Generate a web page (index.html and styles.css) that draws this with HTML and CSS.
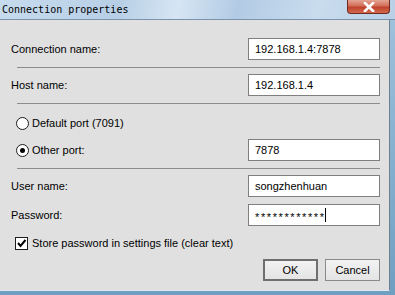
FILE: index.html
```html
<!DOCTYPE html>
<html lang="en">
<head>
    <meta charset="UTF-8">
    <title>Connection properties</title>
    <link rel="stylesheet" href="styles.css">
</head>
<body>
    <div class="window">
        <div class="titlebar">
            <span class="title">Connection properties</span>
            <div class="close-btn">
                <svg width="16" height="10" viewBox="0 0 16 10">
                    <path d="M4 1 L12 9 M12 1 L4 9" stroke="#fff" stroke-width="2.6" stroke-linecap="square"/>
                </svg>
            </div>
        </div>
        <div class="frame">
            <div class="content">
                <div class="row first">
                    <label class="label">Connection name:</label>
                    <div class="field">192.168.1.4:7878</div>
                </div>
                <div class="sep"></div>
                <div class="row">
                    <label class="label">Host name:</label>
                    <div class="field">192.168.1.4</div>
                </div>
                <div class="sep"></div>
                <div class="option-row">
                    <span class="radio"></span>
                    <span>Default port (7091)</span>
                </div>
                <div class="row port-row">
                    <div class="option">
                        <span class="radio checked"></span>
                        <span>Other port:</span>
                    </div>
                    <div class="field">7878</div>
                </div>
                <div class="sep"></div>
                <div class="row">
                    <label class="label">User name:</label>
                    <div class="field">songzhenhuan</div>
                </div>
                <div class="row pass-row">
                    <label class="label">Password:</label>
                    <div class="field password">************<span class="caret"></span></div>
                </div>
                <div class="check-row">
                    <span class="checkbox">
                        <svg width="11" height="11" viewBox="0 0 11 11">
                            <path d="M2 5 L4.5 8 L9.5 2" stroke="#000" stroke-width="2" fill="none"/>
                        </svg>
                    </span>
                    <span>Store password in settings file (clear text)</span>
                </div>
                <div class="buttons">
                    <button class="btn default">OK</button>
                    <button class="btn">Cancel</button>
                </div>
            </div>
        </div>
    </div>
</body>
</html>
```

FILE: styles.css
```css
body {
    margin: 0;
    width: 395px;
    height: 295px;
    overflow: hidden;
    font-family: "Liberation Sans", Arial, sans-serif;
    font-size: 11px;
    color: #000;
    background-color: #8fb3d0;
}

.window {
    width: 395px;
    height: 295px;
    display: flex;
    flex-direction: column;
}

.titlebar {
    height: 20px;
    display: flex;
    align-items: flex-start;
    justify-content: space-between;
    background: linear-gradient(100deg, #c7dbee 0%, #b7cfe6 30%, #d6e5f3 45%, #b2cbe4 60%, #c9dcee 80%, #b9d0e7 100%);
    border-bottom: 1px solid #7b93ad;
    box-sizing: border-box;
}

.title {
    font-family: "DejaVu Sans Mono", monospace;
    font-size: 10px;
    padding: 4px 0 0 2px;
}

.close-btn {
    width: 43px;
    height: 14px;
    margin-right: 5px;
    box-sizing: border-box;
    border: 1px solid #6b2b22;
    border-top: none;
    border-radius: 0 0 4px 4px;
    background: linear-gradient(#e5a493 0%, #d36e58 45%, #c0432c 55%, #d2694e 100%);
    display: flex;
    align-items: center;
    justify-content: center;
}

.frame {
    flex: 1;
    display: flex;
    background: linear-gradient(#9ec1dc, #6f9fc1);
    padding: 0 5px 4px 0;
}

.content {
    flex: 1;
    background-color: #e0e0e0;
    border-right: 1px solid #6e7f8f;
    border-bottom: 1px solid #dfe9f2;
    padding: 18px 9px 0 11px;
    display: flex;
    flex-direction: column;
}

.row {
    display: flex;
    align-items: center;
    justify-content: space-between;
    height: 22px;
}

.field {
    width: 132px;
    height: 22px;
    box-sizing: border-box;
    border: 1px solid #7f7f7f;
    background-color: #fff;
    padding: 0 6px;
    display: flex;
    align-items: center;
}

.sep {
    height: 1px;
    background-color: #8c8c8c;
    margin: 7px 0 6px 6px;
}

.option-row {
    display: flex;
    align-items: center;
    gap: 3px;
    height: 16px;
    margin: 5px 0 0 5px;
}

.option {
    display: flex;
    align-items: center;
    gap: 3px;
    margin-left: 5px;
}

.port-row {
    margin-top: 8px;
}

.radio {
    width: 11px;
    height: 11px;
    border: 1px solid #1c1c1c;
    border-radius: 50%;
    background-color: #fff;
    position: relative;
}

.radio.checked::after {
    content: "";
    position: absolute;
    left: 3px;
    top: 3px;
    width: 5px;
    height: 5px;
    border-radius: 50%;
    background-color: #000;
}

.pass-row {
    margin-top: 7px;
}

.password {
    letter-spacing: 1.6px;
    padding-top: 3px;
}

.caret {
    width: 1px;
    height: 14px;
    background-color: #000;
    margin-top: -3px;
    margin-left: -1px;
}

.check-row {
    display: flex;
    align-items: center;
    gap: 4px;
    margin: 9px 0 0 4px;
    height: 16px;
}

.checkbox {
    width: 11px;
    height: 11px;
    border: 1px solid #1c1c1c;
    background-color: #fff;
    display: flex;
}

.buttons {
    display: flex;
    justify-content: flex-end;
    gap: 7px;
    margin-top: 8px;
}

.btn {
    width: 55px;
    height: 22px;
    font-family: "Liberation Sans", Arial, sans-serif;
    font-size: 11px;
    background: linear-gradient(#f2f2f2, #e4e4e4);
    border: 1px solid #8a8a8a;
    padding: 0;
}

.btn.default {
    border: 2px solid #6f6f6f;
}
```
